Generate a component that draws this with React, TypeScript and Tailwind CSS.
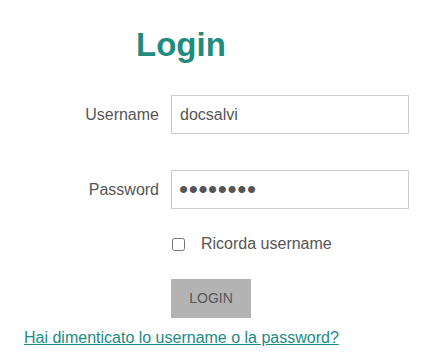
import React from 'react';

export default function App() {
  return (
    <div className="w-[442px] h-[360px] bg-white font-['Liberation_Sans',Arial,sans-serif] text-[#555]">
      <h1 className="pt-[25px] pl-[136px] text-[33px] leading-[40px] font-bold text-[#218b80]">Login</h1>

      <form className="mt-[30px]">
        <div className="flex items-center">
          <label className="w-[159px] text-right text-[16px]">Username</label>
          <input
            type="text"
            defaultValue="docsalvi"
            className="ml-[12px] w-[238px] h-[39px] border border-[#ccc] px-[8px] text-[16px] text-[#555] outline-none"
          />
        </div>

        <div className="flex items-center mt-[36px]">
          <label className="w-[159px] text-right text-[16px]">Password</label>
          <input
            type="password"
            defaultValue="docsalvi"
            className="ml-[12px] w-[238px] h-[39px] border border-[#ccc] px-[7px] text-[26px] leading-[26px] tracking-[0.6px] text-[#555] outline-none"
          />
        </div>

        <div className="flex items-center mt-[23px] pl-[172px]">
          <input type="checkbox" className="w-[13px] h-[13px] m-0" />
          <span className="ml-[16px] text-[16px]">Ricorda username</span>
        </div>

        <div className="mt-[23px] pl-[171px]">
          <button type="button" className="w-[80px] h-[39px] bg-[#b3b3b3] text-[#555] text-[14px]">LOGIN</button>
        </div>

        <div className="mt-[8px] pl-[24px]">
          <a href="#" className="text-[16px] text-[#218b80] underline">Hai dimenticato lo username o la password?</a>
        </div>
      </form>
    </div>
  );
}
